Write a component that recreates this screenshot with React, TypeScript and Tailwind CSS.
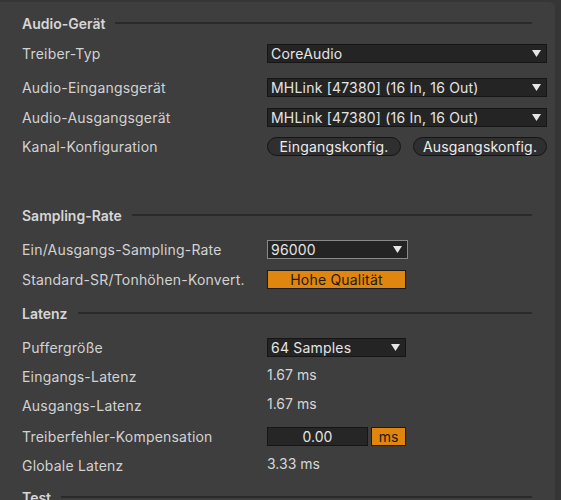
import React from 'react'

const font = { fontFamily: 'Inter, "Noto Sans", sans-serif' }

function Heading({ title, className = '' }: { title: string; className?: string }) {
  return (
    <div className={`flex items-center h-[20px] pr-[23px] ${className}`}>
      <span className="font-semibold text-[14px] text-[#d6d6d6] whitespace-nowrap">{title}</span>
      <div className="ml-[10px] flex-1 h-[2px] bg-[#2a2a2a]" />
    </div>
  )
}

function Row({ label, children, className = '' }: { label: string; children?: React.ReactNode; className?: string }) {
  return (
    <div className={`flex items-center h-[20px] ${className}`}>
      <span className="w-[245px] text-[14px] text-[#d2d2d2] whitespace-nowrap tracking-[0.2px]">{label}</span>
      <div className="flex items-center">{children}</div>
    </div>
  )
}

function Caret() {
  return (
    <svg width="9" height="7" viewBox="0 0 9 7" className="shrink-0">
      <path d="M0 0 L9 0 L4.5 7 Z" fill="#e6e6e6" />
    </svg>
  )
}

function Select({ value, width, light = false }: { value: string; width: string; light?: boolean }) {
  return (
    <div
      className={`${width} h-[19px] flex items-center justify-between pl-[3px] pr-[5px] bg-[#242424] border ${
        light ? 'border-[#8a8a8a]' : 'border-[#161616]'
      } text-[14px] text-[#e4e4e4]`}
    >
      <span className="whitespace-nowrap tracking-[0.2px]">{value}</span>
      <Caret />
    </div>
  )
}

function Pill({ text, width }: { text: string; width: string }) {
  return (
    <div className={`${width} h-[19px] rounded-full bg-[#2f2f2f] border border-[#151515] flex items-center justify-center text-[14px] text-[#ececec] tracking-[0.2px]`}>
      {text}
    </div>
  )
}

export default function App() {
  return (
    <div style={font} className="w-[561px] h-[500px] overflow-hidden bg-[#363636]">
      <div className="h-[500px] mr-[6px] mt-[2px] rounded-tr-[6px] bg-[#3e3e3e] pl-[22px] pt-[11px]">
        <Heading title="Audio-Gerät" />
        <Row label="Treiber-Typ" className="mt-[10px]">
          <Select value="CoreAudio" width="w-[280px]" />
        </Row>
        <Row label="Audio-Eingangsgerät" className="mt-[14px]">
          <Select value="MHLink [47380] (16 In, 16 Out)" width="w-[280px]" />
        </Row>
        <Row label="Audio-Ausgangsgerät" className="mt-[10px]">
          <Select value="MHLink [47380] (16 In, 16 Out)" width="w-[280px]" />
        </Row>
        <Row label="Kanal-Konfiguration" className="mt-[9px]">
          <div className="flex gap-[12px]">
            <Pill text="Eingangskonfig." width="w-[134px]" />
            <Pill text="Ausgangskonfig." width="w-[134px]" />
          </div>
        </Row>

        <Heading title="Sampling-Rate" className="mt-[49px]" />
        <Row label="Ein/Ausgangs-Sampling-Rate" className="mt-[14px]">
          <Select value="96000" width="w-[141px]" light />
        </Row>
        <Row label="Standard-SR/Tonhöhen-Konvert." className="mt-[10px]">
          <div className="w-[139px] h-[19px] bg-[#e0860f] border border-[#1c1c1c] flex items-center justify-center text-[14px] text-[#241a0c] tracking-[0.2px]">
            Hohe Qualität
          </div>
        </Row>

        <Heading title="Latenz" className="mt-[14px]" />
        <Row label="Puffergröße" className="mt-[14px]">
          <Select value="64 Samples" width="w-[139px]" />
        </Row>
        <Row label="Eingangs-Latenz" className="mt-[9px]">
          <span className="text-[14px] text-[#d6d6d6] -mt-[4px]">1.67 ms</span>
        </Row>
        <Row label="Ausgangs-Latenz" className="mt-[9px]">
          <span className="text-[14px] text-[#d6d6d6] -mt-[4px]">1.67 ms</span>
        </Row>
        <Row label="Treiberfehler-Kompensation" className="mt-[11px]">
          <div className="w-[101px] h-[19px] bg-[#262626] border border-[#161616] flex items-center justify-center text-[14px] text-[#e4e4e4]">
            0.00
          </div>
          <div className="ml-[3px] w-[35px] h-[19px] bg-[#e0860f] border border-[#1c1c1c] flex items-center justify-center text-[14px] text-[#241a0c]">
            ms
          </div>
        </Row>
        <Row label="Globale Latenz" className="mt-[9px]">
          <span className="text-[14px] text-[#d6d6d6] -mt-[4px]">3.33 ms</span>
        </Row>

        <Heading title="Test" className="mt-[12px]" />
      </div>
    </div>
  )
}
